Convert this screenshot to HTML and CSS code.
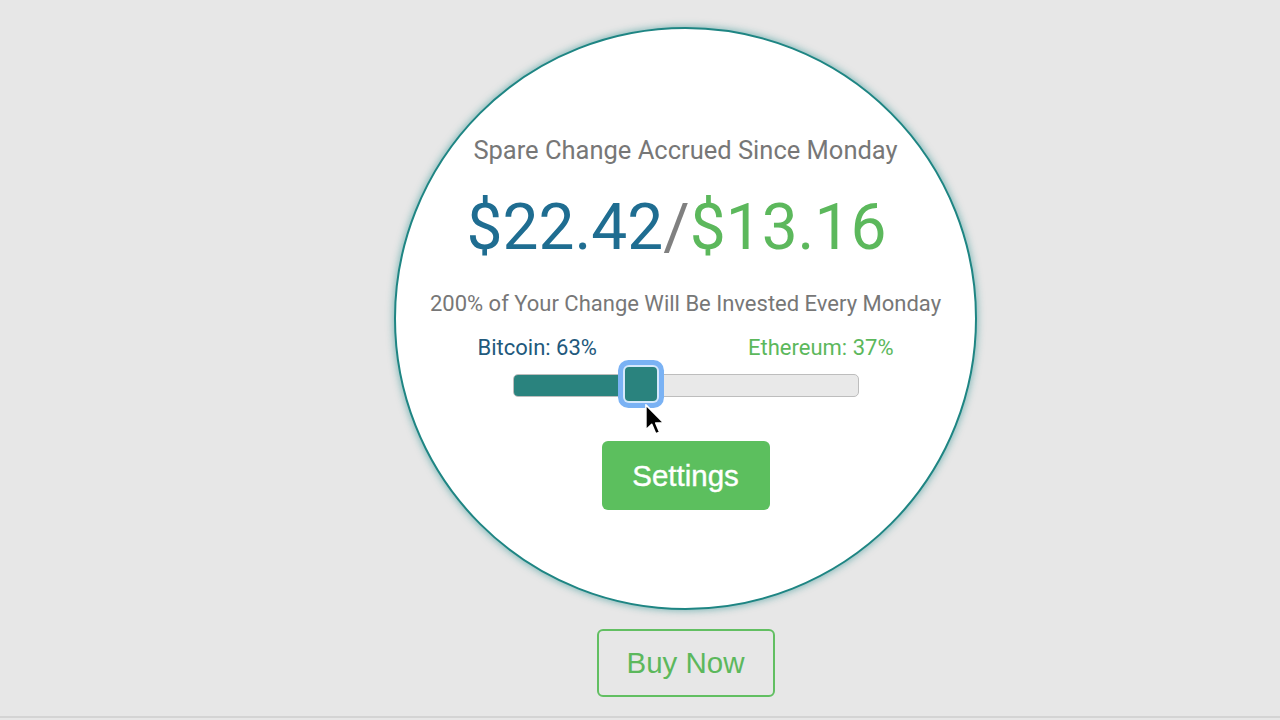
FILE: index.html
```html
<!DOCTYPE html>
<html>
<head>
<meta charset="utf-8">
<link rel="stylesheet" href="styles.css">
</head>
<body>
<div class="page">
  <div class="column">
    <div class="circle">
      <div class="title">Spare Change Accrued Since Monday</div>
      <div class="amount"><span class="btc">$22.42</span><span class="sep">/</span><span class="eth">$13.16</span></div>
      <div class="subtitle">200% of Your Change Will Be Invested Every Monday</div>
      <div class="labels"><span class="btc-label">Bitcoin: 63%</span><span class="eth-label">Ethereum: 37%</span></div>
      <div class="slider">
        <div class="fill" style="width:33%"></div>
        <div class="handle" style="left:111px"></div>
        <svg class="cursor" width="22" height="34" viewBox="0 0 18 28"><path d="M1.5 1.5 L1.5 22 L6.3 17.6 L9.6 25.4 L12.8 24 L9.6 16.4 L16 16.2 Z" fill="#000" stroke="#fff" stroke-width="1.3" stroke-linejoin="round"/></svg>
      </div>
      <button class="settings">Settings</button>
    </div>
    <button class="buy">Buy Now</button>
  </div>
</div>
</body>
</html>
```
FILE: styles.css
```css
html, body {
  margin: 0;
  padding: 0;
  background: #e7e7e7;
}
.page {
  height: 716px;
  border-bottom: 2px solid #d4d4d4;
  padding-left: 91px;
  box-sizing: content-box;
}
.column {
  display: flex;
  flex-direction: column;
  align-items: center;
  padding-top: 27px;
}
.circle {
  width: 583px;
  height: 583px;
  box-sizing: border-box;
  border-radius: 50%;
  background: #fff;
  border: 2px solid #1e8583;
  box-shadow: 0 0 7px 1px rgba(30, 140, 140, 0.5);
  display: flex;
  flex-direction: column;
  align-items: center;
  padding-top: 106px;
  font-family: Roboto, "Liberation Sans", sans-serif;
}
.title {
  font-size: 25.5px;
  line-height: 30px;
  color: #777;
}
.amount {
  margin-top: 31px;
  margin-right: 18px;
  font-size: 64px;
  line-height: 64px;
}
.btc { color: #1f6d91; }
.sep { color: #808080; }
.eth { color: #5cb85c; }
.subtitle {
  margin-top: 31px;
  font-size: 22px;
  line-height: 26px;
  color: #777;
}
.labels {
  margin-top: 18px;
  width: 416px;
  display: flex;
  justify-content: space-between;
  font-size: 22px;
  line-height: 26px;
}
.btc-label { color: #22597c; }
.eth-label { color: #5cb85c; }
.slider {
  position: relative;
  margin-top: 13px;
  width: 346px;
  height: 23px;
  box-sizing: border-box;
  border: 1px solid #bdbdbd;
  border-radius: 5px;
  background: #e9e9e9;
}
.fill {
  height: 100%;
  background: #2a837e;
  border-radius: 4px 0 0 4px;
}
.handle {
  position: absolute;
  top: -8px;
  width: 32px;
  height: 34px;
  box-sizing: border-box;
  background: #2a837e;
  border-radius: 4px;
  box-shadow: 0 0 0 2px #d6e8fc, 0 0 0 7px #7ab2f4;
}
.cursor {
  position: absolute;
  left: 130px;
  top: 28px;
}
.settings {
  margin-top: 44px;
  width: 168px;
  height: 69px;
  border: none;
  border-radius: 6px;
  background: #5cbf5e;
  color: #fff;
  font-family: "Liberation Sans", Arial, sans-serif;
  font-size: 29.5px;
  -webkit-text-stroke: 0.4px #fff;
  padding: 0;
}
.buy {
  margin-top: 19px;
  width: 178px;
  height: 68px;
  border: 2px solid #62bf62;
  border-radius: 6px;
  background: transparent;
  color: #5cb85c;
  font-family: "Liberation Sans", Arial, sans-serif;
  font-size: 29.5px;
  padding: 0;
}
```
